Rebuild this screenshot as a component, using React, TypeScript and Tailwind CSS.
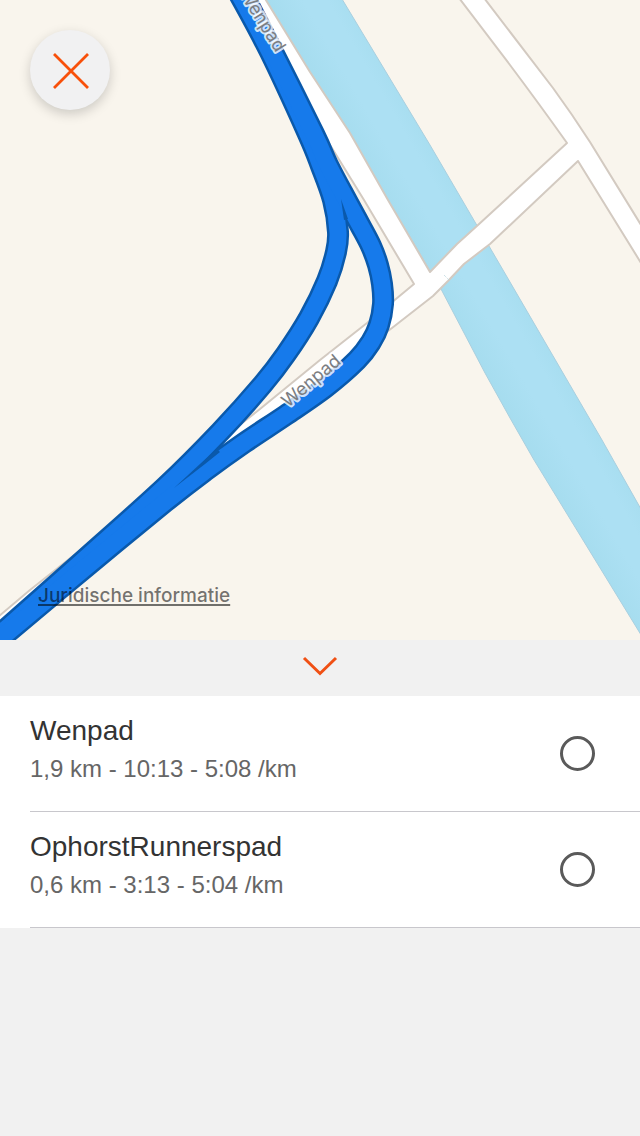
import { useState } from 'react';

type Point = [number, number];

const routeA: Point[] = [
  [238, -8], [270, 52], [308, 134], [321, 166], [333, 200], [338, 232], [336, 252], [327, 281],
  [309, 318], [286, 354], [263, 384], [220, 432], [165, 487], [86, 558], [7, 628], [-24, 655],
];

const routeB: Point[] = [
  [242, -8], [273, 52], [314, 134], [328, 165], [347, 201], [360, 225], [371, 246], [378, 265],
  [382, 284], [383, 304], [379, 325], [371, 342], [357, 360], [326, 387], [286, 415], [244, 443],
  [205, 471], [165, 502], [86, 567], [7, 633], [-24, 659],
];

/** Builds a smooth curve through all the given points. */
function smoothPath(points: Point[]): string {
  let d = `M${points[0][0]} ${points[0][1]}`;
  for (let i = 0; i < points.length - 1; i++) {
    const p0 = points[Math.max(i - 1, 0)];
    const p1 = points[i];
    const p2 = points[i + 1];
    const p3 = points[Math.min(i + 2, points.length - 1)];
    d += ` C${p1[0] + (p2[0] - p0[0]) / 6} ${p1[1] + (p2[1] - p0[1]) / 6}`;
    d += ` ${p2[0] - (p3[0] - p1[0]) / 6} ${p2[1] - (p3[1] - p1[1]) / 6}`;
    d += ` ${p2[0]} ${p2[1]}`;
  }
  return d;
}

function RouteMap() {
  const a = smoothPath(routeA);
  const b = smoothPath(routeB);
  return (
    <svg viewBox="0 0 640 640" className="block h-full w-full" role="img" aria-label="Wenpad">
      <defs>
        <linearGradient id="water" gradientUnits="userSpaceOnUse" x1="382" y1="205" x2="456" y2="162">
          <stop offset="0" stopColor="#a5dcee" />
          <stop offset="0.4" stopColor="#ace0f3" />
          <stop offset="0.65" stopColor="#ace0f3" />
          <stop offset="1" stopColor="#a5dcee" />
        </linearGradient>
      </defs>
      <rect width="640" height="640" fill="#f9f5ed" />
      <path
        d="M262 -6 L310 72 L350 133 L388 200 L441 289 L485 373 L510 418 L534 460 L646 643 L646 518 L602 440 L503 270 L430 145 L339 -6 Z"
        fill="url(#water)"
        stroke="#a9cfdf"
        strokeWidth="1"
      />
      <g fill="#fff" stroke="#d3cac1" strokeWidth="2" strokeLinejoin="round">
        <path d="M456 -6 L510 65 Q540 105 567 143 L478 225 L457 244 L430 272 L388 200 L350 133 L310 72 L261 -8 L232 -8 L290 80 L327 140 L364 200 L414 284 L367 323 L320 360 L260 409 L150 495 L30 590 L-8 622 L-8 650 L222 456 L392 328 L433 296 L448 281 L464 264 L490 244 L578 161 L646 271 L646 233 L590 142 Q572 114 553 88 L481 -6 Z" />
      </g>
      <path d="M444 275 L449 280" stroke="#b9d5dd" strokeWidth="1" strokeDasharray="1 1" />
      <g fill="none" stroke="#0a59ab" strokeWidth="22" strokeLinejoin="round">
        <path d={a} />
        <path d={b} />
      </g>
      <g fill="none" stroke="#167aeb" strokeWidth="17" strokeLinejoin="round">
        <path d={a} />
        <path d={b} />
      </g>
      <path
        d="M174 488 L200 464 L217 449 L220 452 L205 464 Z M341 199 L344 220 L348 219 Z"
        fill="#0a59ab"
      />
      <g
        fontFamily="Inter, 'Liberation Sans', sans-serif"
        fontSize="18"
        fill="#7b7d81"
        stroke="#fff"
        strokeOpacity="0.8"
        strokeWidth="4"
        strokeLinejoin="round"
        paintOrder="stroke"
      >
        <text transform="translate(288 408) rotate(-40)">Wenpad</text>
        <text transform="translate(276 53) rotate(58)" textAnchor="end">Wenpad</text>
      </g>
    </svg>
  );
}

const segments = [
  { id: 'wenpad', name: 'Wenpad', stats: '1,9 km - 10:13 - 5:08 /km' },
  { id: 'ophorst', name: 'OphorstRunnerspad', stats: '0,6 km - 3:13 - 5:04 /km' },
];

export default function App() {
  const [selected, setSelected] = useState('');
  return (
    <main className="min-h-screen bg-[#f1f1f1] font-['Liberation_Sans',Arial,sans-serif]">
      <section className="relative aspect-square w-full overflow-hidden">
        <RouteMap />
        <button
          type="button"
          aria-label="Sluiten"
          className="absolute top-[30px] left-[30px] flex size-20 items-center justify-center rounded-full bg-[#f1f1f2] shadow-[0_4px_12px_rgba(0,0,0,0.18)]"
        >
          <svg viewBox="0 0 40 40" className="size-10" fill="none" stroke="#f8500a" strokeWidth="2.8">
            <path d="M4 4 L38 38 M38 4 L4 38" />
          </svg>
        </button>
        <a
          href="#legal"
          className="absolute bottom-8 left-[38px] font-['Inter',sans-serif] text-[19px] leading-6 font-medium text-black/55 underline decoration-2 underline-offset-2"
        >
          Juridische informatie
        </a>
      </section>

      <button type="button" aria-label="Inklappen" className="flex h-14 w-full items-center justify-center">
        <svg viewBox="0 0 40 24" className="h-6 w-10" fill="none" stroke="#f05014" strokeWidth="3">
          <path d="M4 2 L20 17.500 L36 2" />
        </svg>
      </button>

      <ul className="bg-white pl-[30px]">
        {segments.map((segment) => (
          <li key={segment.id} className="border-b border-[#c8c7cc]">
            <label htmlFor={segment.id} className="flex items-center justify-between py-4 pr-[45px]">
              <span className="flex flex-col pb-[7px]">
                <span className="text-[28px] leading-[38px] text-[#333]">{segment.name}</span>
                <span className="text-[24px] leading-[38px] text-[#666]">{segment.stats}</span>
              </span>
              <input
                id={segment.id}
                type="radio"
                name="segment"
                checked={selected === segment.id}
                onChange={() => setSelected(segment.id)}
                className="size-[35px] shrink-0 appearance-none rounded-full border-3 border-[#5a5a5a] checked:bg-[#f8500a]"
              />
            </label>
          </li>
        ))}
      </ul>
    </main>
  );
}
